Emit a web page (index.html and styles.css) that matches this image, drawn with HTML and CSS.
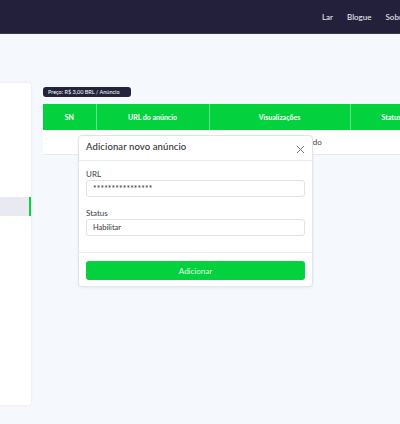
FILE: index.html
```html
<!DOCTYPE html>
<html lang="pt">
<head>
<meta charset="utf-8">
<title>Anúncios</title>
<link rel="stylesheet" href="styles.css">
</head>
<body>
<header class="navbar">
  <nav class="nav-links">
    <a href="#">Lar</a>
    <a href="#">Blogue</a>
    <a href="#">Sobre</a>
  </nav>
</header>
<div class="layout">
  <aside class="sidebar">
    <div class="side-item active"></div>
  </aside>
  <main class="content">
    <div class="badge">Preço: R$ 3,00 BRL / Anúncio</div>
    <table class="ads">
      <thead>
        <tr>
          <th class="c-sn">SN</th>
          <th class="c-url">URL do anúncio</th>
          <th class="c-vis">Visualizações</th>
          <th class="c-st">Status</th>
        </tr>
      </thead>
      <tbody>
        <tr><td colspan="4" class="empty">Nenhum dado encontrado</td></tr>
      </tbody>
    </table>
  </main>
</div>
<div class="modal">
  <div class="modal-header">
    <h5>Adicionar novo anúncio</h5>
    <svg class="close" viewBox="0 0 10 10" width="9" height="9"><path d="M1 1L9 9M9 1L1 9" stroke="#6b6f75" stroke-width="1.1" fill="none"/></svg>
  </div>
  <div class="modal-body">
    <label class="lbl">URL</label>
    <div class="input pw">****************</div>
    <label class="lbl second">Status</label>
    <div class="input">Habilitar</div>
  </div>
  <div class="modal-footer">
    <button class="btn">Adicionar</button>
  </div>
</div>
</body>
</html>
```
FILE: styles.css
```css
html, body {
  margin: 0;
  padding: 0;
}
body {
  width: 400px;
  height: 424px;
  overflow: hidden;
  background: #f5f8fd;
  font-family: Lato, "Open Sans", sans-serif;
  color: #333;
  position: relative;
}
.navbar {
  height: 34px;
  background: #22203a;
  border-bottom: 1px solid #3a3950;
  box-sizing: border-box;
  display: flex;
  align-items: center;
  padding-left: 322px;
  overflow: hidden;
}
.nav-links {
  display: flex;
  gap: 14px;
  flex: none;
}
.nav-links a {
  color: #e6e6ee;
  text-decoration: none;
  font-size: 8px;
  font-weight: 500;
  white-space: nowrap;
}
.layout {
  display: flex;
}
.sidebar {
  width: 31px;
  height: 322px;
  margin-top: 49px;
  background: #fff;
  box-shadow: 0 0 3px rgba(0,0,0,0.08);
  border-radius: 0 2px 2px 0;
  padding-top: 114px;
  box-sizing: border-box;
  flex: none;
}
.side-item {
  height: 19px;
}
.side-item.active {
  background: #e9e9f1;
  border-right: 2px solid #06d43f;
}
.content {
  margin-left: 12px;
  padding-top: 53px;
  flex: none;
}
.badge {
  display: block;
  box-sizing: border-box;
  background: #23223b;
  color: #fff;
  font-size: 5.5px;
  line-height: 10px;
  height: 10px;
  padding: 0 5px;
  border-radius: 3px;
  width: 88px;
  white-space: nowrap;
}
.ads {
  margin-top: 7px;
  border-collapse: collapse;
  width: 389px;
  background: #fff;
}
.ads th {
  background: #03d13e;
  color: #fff;
  font-size: 7px;
  line-height: 8px;
  font-weight: 700;
  height: 26px;
  padding: 0;
  border-left: 1px solid #5fe286;
  box-sizing: border-box;
}
.ads th:first-child { border-left: none; }
.c-sn { width: 53px; }
.c-url { width: 113px; }
.c-vis { width: 141px; }
.ads td {
  height: 24px;
  font-size: 8px;
  line-height: 10px;
  color: #444;
  border-bottom: 1px solid #e7eaee;
  padding: 0;
  box-sizing: border-box;
}
.ads td.empty {
  padding-left: 187px;
}
.modal {
  position: absolute;
  left: 78px;
  top: 135px;
  width: 235px;
  background: #fff;
  border: 1px solid #e1e4e8;
  border-radius: 4px;
  box-shadow: 0 1px 3px rgba(0,0,0,0.06);
  box-sizing: border-box;
}
.modal-header {
  height: 25px;
  border-bottom: 1px solid #e9ecef;
  display: flex;
  align-items: center;
  justify-content: space-between;
  padding: 0 7px 0 7px;
  box-sizing: border-box;
}
.modal-header h5 {
  margin: 0 0 3px;
  font-size: 9.5px;
  font-weight: 500;
  color: #2f3237;
  letter-spacing: 0.1px;
}
.close {
  margin-top: 2px;
}
.modal-body {
  padding: 8px 7px 16px;
}
.lbl {
  display: block;
  font-size: 8px;
  line-height: 11px;
  color: #3a3d42;
}
.lbl.second {
  margin-top: 11px;
}
.input {
  height: 17px;
  border: 1px solid #dfe3e8;
  border-radius: 3px;
  box-sizing: border-box;
  font-size: 7.5px;
  line-height: 15px;
  padding-left: 6px;
  color: #333;
}
.input.pw {
  font-size: 8.5px;
  line-height: 17px;
  letter-spacing: 0.1px;
}
.modal-footer {
  border-top: 1px solid #e9ecef;
  padding: 8px 7px 6px;
}
.btn {
  display: block;
  width: 100%;
  height: 19px;
  border: none;
  border-radius: 3px;
  background: #03d13e;
  color: #e3fbe8;
  font-family: Lato, "Open Sans", sans-serif;
  font-size: 8px;
  padding: 0;
}
```
